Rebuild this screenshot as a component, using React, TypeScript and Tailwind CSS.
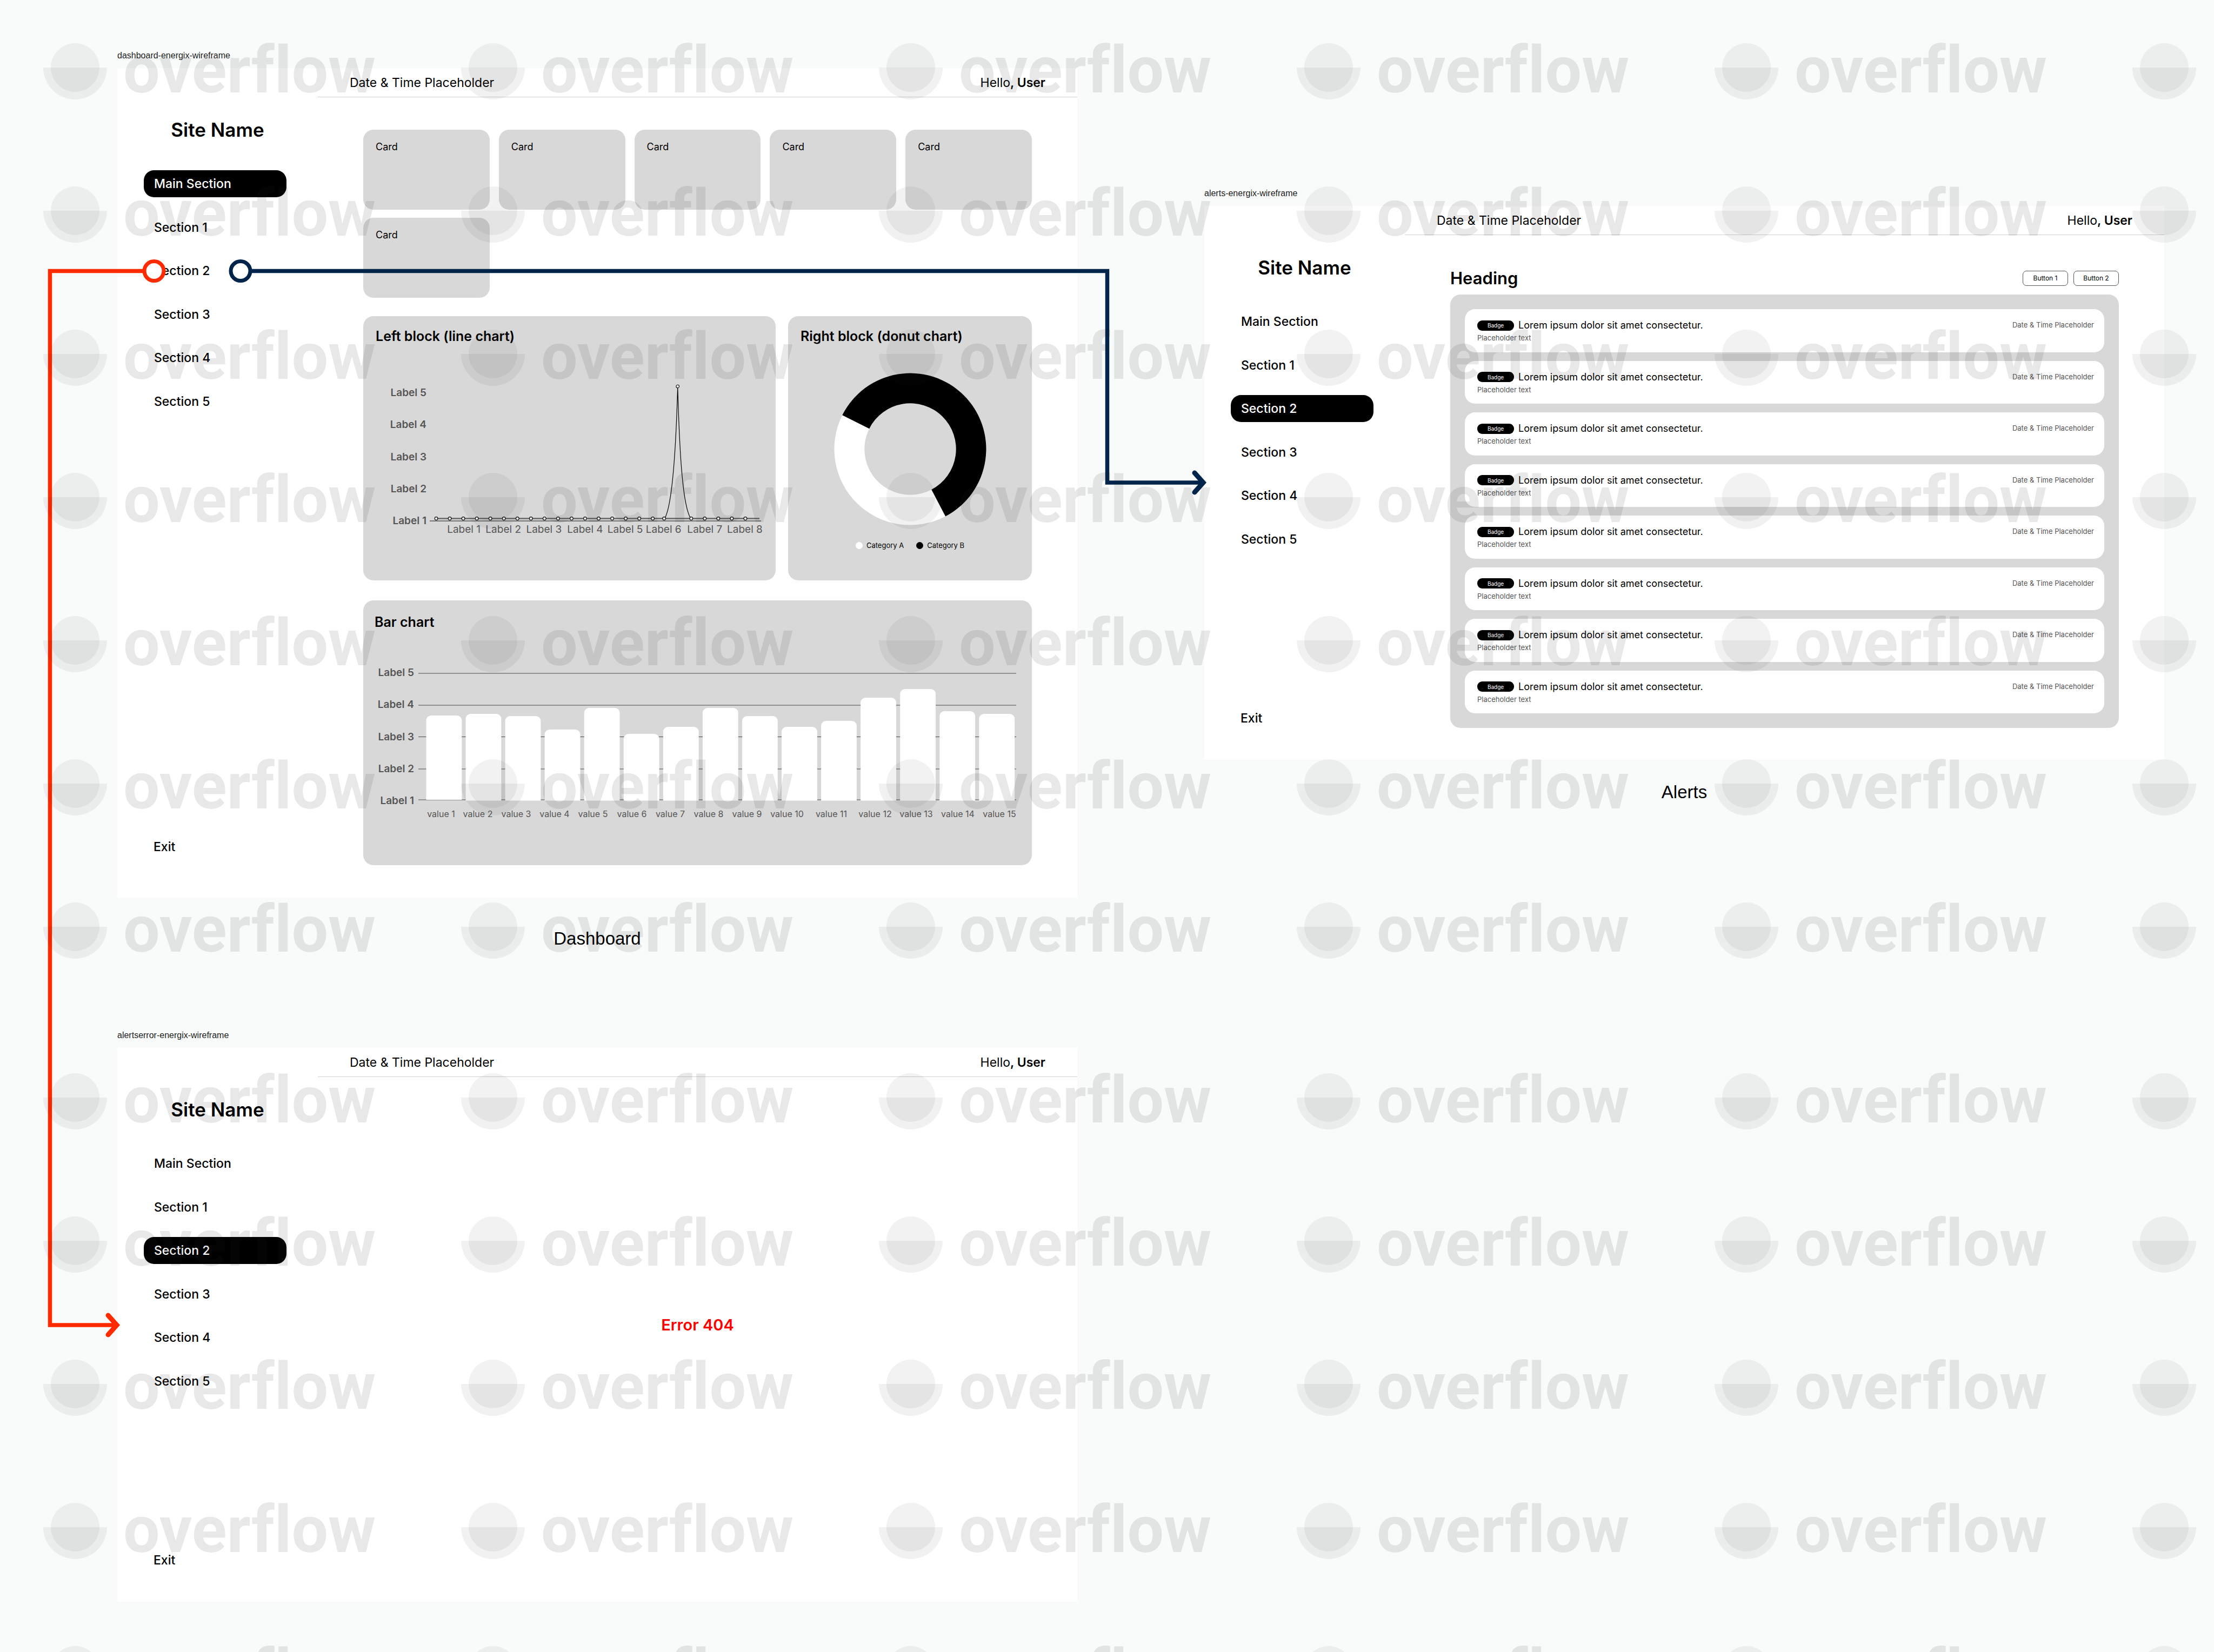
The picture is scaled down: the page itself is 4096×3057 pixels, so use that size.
import React from "react";
import clsx from "clsx";

const NAV = ["Main Section", "Section 1", "Section 2", "Section 3", "Section 4", "Section 5"];
const LEVELS = ["Label 5", "Label 4", "Label 3", "Label 2", "Label 1"];

function Sidebar({ active, tall }: { active: string; tall?: boolean }) {
  return (
    <aside className={clsx("flex w-[371px] shrink-0 flex-col", tall ? "pb-[78px]" : "pb-[61px]")}>
      <h2 className="pt-[90px] text-center text-[35px] leading-[48px] font-semibold">Site Name</h2>
      <nav className="mt-[51px] mr-[58px] ml-[49px] flex min-h-[453px] flex-col justify-between">
        {NAV.map((item) => (
          <a
            key={item}
            href="#"
            className={clsx(
              "flex h-[50px] items-center rounded-[19px] px-[19px] text-[23px] leading-[32px] font-medium",
              item === active && "bg-black text-white"
            )}
          >
            {item}
          </a>
        ))}
      </nav>
      <a href="#" className="mt-auto ml-[67px] self-start text-[23px] leading-[32px] font-medium">
        Exit
      </a>
    </aside>
  );
}

function Frame({
  file,
  active,
  tall,
  children,
}: {
  file: string;
  active: string;
  tall?: boolean;
  children: React.ReactNode;
}) {
  return (
    <section>
      <div className="mb-[13px] font-['Liberation_Sans',sans-serif] text-[16px] leading-[20px] text-[#222]">{file}</div>
      <div className={clsx("flex bg-white", tall ? "min-h-[1535px]" : "min-h-[1025px]")}>
        <Sidebar active={active} tall={tall} />
        <div className="flex min-w-0 flex-1 flex-col">
          <header className="flex h-[54px] items-center justify-between border-b border-[#d0d0d0] px-[59px] text-[23px] leading-[32px]">
            <span>Date &amp; Time Placeholder</span>
            <span>
              Hello<span className="font-semibold">, User</span>
            </span>
          </header>
          {children}
        </div>
      </div>
    </section>
  );
}

function Caption({ className, children }: { className: string; children: React.ReactNode }) {
  return (
    <p className={clsx("text-center font-['Liberation_Sans',sans-serif] text-[33px] leading-[40px]", className)}>
      {children}
    </p>
  );
}

function LevelLabels({ className }: { className: string }) {
  return (
    <div
      className={clsx(
        "flex h-[261px] shrink-0 flex-col justify-between text-right text-[19px] leading-[24px] font-semibold text-[#555]",
        className
      )}
    >
      {LEVELS.map((label) => (
        <span key={label}>{label}</span>
      ))}
    </div>
  );
}

const LINE_POINTS = [...Array.from({ length: 17 }, (_, i) => 12 + 25 * i), 433, 483, 508, 533, 558, 583];
const LINE_LABELS = [63, 136, 211, 287, 361, 432, 508, 582];

function LineChart() {
  return (
    <svg viewBox="0 0 612 276" className="min-w-0 flex-1 overflow-visible" role="img" aria-label="Line chart">
      <path d="M12 244H609" stroke="#666" strokeWidth="2.5" />
      <path d="M0 248.5H612" stroke="#555" strokeWidth="1.5" />
      <path
        d="M434 244C449 218 455 108 458 1C461 108 466 218 482 244"
        fill="none"
        stroke="#000"
        strokeWidth="1.2"
      />
      {LINE_POINTS.map((x) => (
        <circle key={x} cx={x} cy="244" r="2.8" fill="#fff" stroke="#000" strokeWidth="1.1" />
      ))}
      <circle cx="458" cy="0" r="2.8" fill="#fff" stroke="#000" strokeWidth="1.1" />
      {LINE_LABELS.map((x, i) => (
        <text key={x} x={x} y="271" textAnchor="middle" className="fill-[#555] text-[19px]">
          Label {i + 1}
        </text>
      ))}
    </svg>
  );
}

function DonutChart() {
  return (
    <svg viewBox="-141 -141 282 282" className="mx-auto mt-[52px] block size-[282px]" role="img" aria-label="Donut chart">
      <path
        d="M-125.7 -62.8A140.5 140.5 0 0 0 65.2 124.5L39.3 75A84.7 84.7 0 0 1 -75.8 -37.8Z"
        fill="#fff"
      />
      <path
        d="M-125.7 -62.8A140.5 140.5 0 1 1 65.2 124.5L39.3 75A84.7 84.7 0 1 0 -75.8 -37.8Z"
        fill="#000"
      />
    </svg>
  );
}

const BARS = [
  { top: 91, label: 42 },
  { top: 88, label: 110 },
  { top: 92, label: 181 },
  { top: 117, label: 252 },
  { top: 77, label: 323 },
  { top: 125, label: 395 },
  { top: 112, label: 466 },
  { top: 77, label: 537 },
  { top: 92, label: 608 },
  { top: 112, label: 682 },
  { top: 101, label: 764 },
  { top: 58, label: 845 },
  { top: 42, label: 921 },
  { top: 83, label: 998 },
  { top: 88, label: 1075 },
];

function BarChart() {
  return (
    <svg viewBox="0 0 1106 286" className="min-w-0 flex-1" role="img" aria-label="Bar chart">
      {[13, 72, 190, 247].map((y) => (
        <path key={y} d={`M0 ${y}H1106`} stroke="#919191" strokeWidth="2" />
      ))}
      <path d="M0 130.5H1106" stroke="#444" strokeWidth="1" />
      {BARS.map(({ top }, i) => {
        const x = 14.5 + 73.06 * i;
        const base = i === 0 ? 247 : 248.5;
        return (
          <path
            key={i}
            d={`M${x} ${base}V${top + 9}a9 9 0 0 1 9 -9h47.8a9 9 0 0 1 9 9V${base}Z`}
            fill="#fff"
          />
        );
      })}
      {BARS.map(({ label }, i) => (
        <text key={label} x={label} y="279" textAnchor="middle" className="fill-[#555] text-[16px]">
          value {i + 1}
        </text>
      ))}
    </svg>
  );
}

function Dashboard() {
  return (
    <div className="flex flex-col px-[84px] pt-[60px] pb-[60px]">
      <div className="grid grid-cols-5 gap-x-[17px] gap-y-[15px]">
        {Array.from({ length: 6 }, (_, i) => (
          <div key={i} className="h-[148px] rounded-[19px] bg-[#d8d8d8] px-[23px] pt-[20px] text-[18px] leading-[24px]">
            Card
          </div>
        ))}
      </div>
      <div className="mt-[34px] grid grid-cols-[763fr_451fr] gap-[23px]">
        <div className="h-[489px] rounded-[19px] bg-[#d8d8d8] pt-[21px] pr-[27px]">
          <h3 className="pl-[23px] text-[25px] leading-[32px] font-semibold">Left block (line chart)</h3>
          <div className="mt-[77px] flex items-start gap-[6px]">
            <LevelLabels className="w-[117px]" />
            <LineChart />
          </div>
        </div>
        <div className="h-[489px] rounded-[19px] bg-[#d8d8d8] pt-[21px]">
          <h3 className="pl-[23px] text-[25px] leading-[32px] font-semibold">Right block (donut chart)</h3>
          <DonutChart />
          <div className="mt-[27px] flex justify-center gap-[23px] text-[13px] leading-[20px]">
            <span className="flex items-center gap-[7px]">
              <i className="size-[13px] rounded-full bg-white" />
              Category A
            </span>
            <span className="flex items-center gap-[7px]">
              <i className="size-[13px] rounded-full bg-black" />
              Category B
            </span>
          </div>
        </div>
      </div>
      <div className="mt-[37px] h-[490px] rounded-[19px] bg-[#d8d8d8] pt-[24px] pr-[29px]">
        <h3 className="pl-[21px] text-[25px] leading-[32px] font-semibold">Bar chart</h3>
        <div className="mt-[66px] flex items-start gap-[8px]">
          <LevelLabels className="w-[94px]" />
          <BarChart />
        </div>
      </div>
    </div>
  );
}

function Alerts() {
  return (
    <div className="px-[84px] pt-[60px]">
      <div className="flex h-[40px] items-center justify-between">
        <h1 className="text-[31px] leading-[40px] font-semibold">Heading</h1>
        <div className="flex gap-[10px]">
          {["Button 1", "Button 2"].map((label) => (
            <button key={label} type="button" className="h-[28px] w-[84px] rounded-[7px] border border-[#555] text-[12px] leading-[20px]">
              {label}
            </button>
          ))}
        </div>
      </div>
      <ul className="mt-[10px] grid h-[802px] auto-rows-fr gap-[16px] rounded-[19px] bg-[#d8d8d8] p-[27px]">
        {Array.from({ length: 8 }, (_, i) => (
          <li key={i} className="flex justify-between rounded-[19px] bg-white pt-[18px] pr-[19px] pl-[23px]">
            <div>
              <div className="flex items-center gap-[8px]">
                <span className="flex h-[19px] w-[68px] items-center justify-center rounded-[9px] bg-black text-[10px] leading-[16px] text-white">
                  Badge
                </span>
                <span className="text-[18px] leading-[24px]">Lorem ipsum dolor sit amet consectetur.</span>
              </div>
              <p className="text-[13px] leading-[22px] text-[#555]">Placeholder text</p>
            </div>
            <time className="text-[13px] leading-[22px] text-[#555]">Date &amp; Time Placeholder</time>
          </li>
        ))}
      </ul>
    </div>
  );
}

function WatermarkRows({ rows }: { rows: number }) {
  return (
    <div className="grid auto-rows-[265px]">
      {Array.from({ length: rows }, (_, r) => (
        <div key={r} className="flex items-start">
          {Array.from({ length: 6 }, (_, c) => (
            <div key={c} className="flex w-[773px] shrink-0 items-center gap-[30px]">
              <svg viewBox="-59 -45 118 104" className="h-[104px] w-[118px] shrink-0">
                <circle r="45" fill="#262626" fillOpacity="0.058" />
                <path d="M-59 0A59 59 0 0 0 59 0Z" fill="#262626" fillOpacity="0.062" />
              </svg>
              {c < 5 && (
                <span className="pb-[4px] font-['Roboto',sans-serif] text-[120px] leading-[100px] font-bold whitespace-nowrap text-[#262626]/[0.106] [font-variant-ligatures:none]">
                  overflow
                </span>
              )}
            </div>
          ))}
        </div>
      ))}
    </div>
  );
}

function Watermark() {
  return (
    <div aria-hidden="true" className="pointer-events-none absolute inset-0 flex flex-col gap-[51px] overflow-hidden pt-[80px] pl-[80px] select-none">
      <WatermarkRows rows={7} />
      <WatermarkRows rows={5} />
    </div>
  );
}

function Connectors() {
  return (
    <svg
      aria-hidden="true"
      viewBox="0 0 4096 3057"
      preserveAspectRatio="xMinYMin"
      className="pointer-events-none absolute inset-0 w-full"
      fill="none"
      strokeWidth="7.5"
    >
      <g stroke="#ff2a00">
        <path d="M285 501.5H92.5V2452H214" />
        <path d="M200 2434L216 2452L200 2470" strokeWidth="9" strokeLinecap="round" />
        <circle cx="285" cy="501.5" r="18" fill="#fff" strokeWidth="7" />
      </g>
      <g stroke="#00244a">
        <path d="M445 501.5H2048.5V893H2225" />
        <path d="M2210 875L2226 893L2210 911" strokeWidth="9" strokeLinecap="round" />
        <circle cx="445" cy="501.5" r="18" fill="#fff" strokeWidth="7" />
      </g>
    </svg>
  );
}

export default function App() {
  return (
    <main className="relative min-h-screen overflow-hidden bg-[#f9fbfa] font-['Inter',sans-serif] text-black">
      <div className="grid grid-cols-2 gap-[235px] pr-[92px] pb-[93px] pl-[217px]">
        <div className="pt-[93px]">
          <Frame file="dashboard-energix-wireframe" active="Main Section" tall>
            <Dashboard />
          </Frame>
          <Caption className="mt-[56px] mb-[149px]">Dashboard</Caption>
          <Frame file="alertserror-energix-wireframe" active="Section 2">
            <div className="flex flex-1 items-center justify-center pb-[54px]">
              <p className="text-[29px] leading-[40px] font-semibold text-[#ff0000]">Error 404</p>
            </div>
          </Frame>
        </div>
        <div className="pt-[348px]">
          <Frame file="alerts-energix-wireframe" active="Section 2">
            <Alerts />
          </Frame>
          <Caption className="mt-[40px]">Alerts</Caption>
        </div>
      </div>
      <Connectors />
      <Watermark />
    </main>
  );
}
